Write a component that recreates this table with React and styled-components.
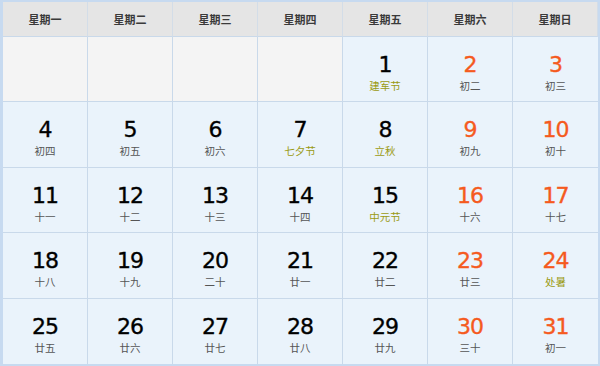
import React from "react";
import styled, { createGlobalStyle } from "styled-components";

const Global = createGlobalStyle`
  html, body { margin: 0; padding: 0; background: #fff; }
  body { font-family: "DejaVu Sans", "Noto Sans CJK SC", sans-serif; }
`;

const Calendar = styled.div`
  box-sizing: border-box;
  width: 600px;
  height: 366px;
  border: 2px solid #c7daf0;
  border-left-width: 3px;
  display: grid;
  grid-template-columns: repeat(7, 1fr);
  grid-template-rows: 35px repeat(5, 1fr);
  background: #eaf3fb;
`;

const HeadCell = styled.div`
  background: #e5e5e5;
  border-right: 1px solid #d3dde8;
  border-bottom: 1px solid #c9d9ea;
  display: flex;
  align-items: center;
  justify-content: center;
  font-family: "Noto Sans CJK SC", sans-serif;
  font-weight: bold;
  font-size: 11px;
  color: #3a3a3a;
  &:last-child { border-right: none; }
`;

const DayCell = styled.div`
  background: ${(p) => (p.$empty ? "#f4f4f4" : "#eaf3fb")};
  border-right: ${(p) => (p.$last ? "none" : "1px solid #c9d9ea")};
  border-bottom: ${(p) => (p.$bottom ? "none" : "1px solid #c9d9ea")};
  display: flex;
  flex-direction: column;
  align-items: center;
  padding-top: 16px;
  box-sizing: border-box;
`;

const Num = styled.div`
  font-family: "DejaVu Sans", sans-serif;
  font-size: 22px;
  letter-spacing: -1px;
  line-height: 24px;
  -webkit-text-stroke: 0.35px currentColor;
  color: ${(p) => (p.$weekend ? "#f55a1e" : "#000")};
`;

const Lunar = styled.div`
  margin-top: 2px;
  font-family: "Noto Sans CJK SC", sans-serif;
  font-size: 10.5px;
  line-height: 13px;
  color: ${(p) => (p.$fest ? "#9a9a12" : "#555")};
`;

const heads = ["星期一", "星期二", "星期三", "星期四", "星期五", "星期六", "星期日"];

const days = [
  null, null, null, null,
  [1, "建军节", true], [2, "初二"], [3, "初三"],
  [4, "初四"], [5, "初五"], [6, "初六"], [7, "七夕节", true], [8, "立秋", true], [9, "初九"], [10, "初十"],
  [11, "十一"], [12, "十二"], [13, "十三"], [14, "十四"], [15, "中元节", true], [16, "十六"], [17, "十七"],
  [18, "十八"], [19, "十九"], [20, "二十"], [21, "廿一"], [22, "廿二"], [23, "廿三"], [24, "处暑", true],
  [25, "廿五"], [26, "廿六"], [27, "廿七"], [28, "廿八"], [29, "廿九"], [30, "三十"], [31, "初一"],
];

export default function App() {
  return (
    <>
      <Global />
      <Calendar>
        {heads.map((h) => (
          <HeadCell key={h}>{h}</HeadCell>
        ))}
        {days.map((d, i) => {
          const col = i % 7;
          const last = col === 6;
          const bottom = i >= 28;
          if (!d) return <DayCell key={i} $empty $last={last} $bottom={bottom} />;
          const [n, l, fest] = d;
          return (
            <DayCell key={i} $last={last} $bottom={bottom}>
              <Num $weekend={col >= 5}>{n}</Num>
              <Lunar $fest={fest}>{l}</Lunar>
            </DayCell>
          );
        })}
      </Calendar>
    </>
  );
}
